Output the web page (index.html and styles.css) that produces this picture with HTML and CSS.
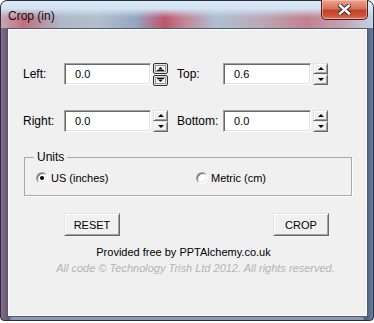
FILE: index.html
```html
<!DOCTYPE html>
<html lang="en">
<head>
    <meta charset="UTF-8">
    <meta name="viewport" content="width=device-width, initial-scale=1.0">
    <title>Crop (in)</title>
    <link rel="stylesheet" href="styles.css">
</head>
<body>
    <div class="window">
        <div class="titlebar">
            <span class="title">Crop (in)</span>
            <button class="close" title="Close">
                <svg width="13" height="11" viewBox="0 0 13 11">
                    <path d="M2 1.5 L11 9.5 M11 1.5 L2 9.5" stroke="#3b2a28" stroke-width="4.4" stroke-linecap="square"/>
                    <path d="M2 1.5 L11 9.5 M11 1.5 L2 9.5" stroke="#ffffff" stroke-width="2.4" stroke-linecap="square"/>
                </svg>
            </button>
        </div>

        <div class="client">
            <div class="fields">
                <label class="field-label" for="left">Left:</label>
                <input class="num" type="text" id="left" value="0.0">
                <div class="spin-cell">
                    <svg class="spin-img" width="15" height="23" viewBox="0 0 15 23">
                        <rect x="0.5" y="0.5" width="14" height="10" rx="1.5" fill="#e2e2e2" stroke="#333"/>
                        <rect x="2.5" y="2.5" width="10" height="6" fill="#f6f6f6" stroke="#999"/>
                        <path d="M5 6.5 L10 6.5 L7.5 4 Z" fill="#000"/>
                        <rect x="4" y="7" width="7" height="1" fill="#000"/>
                        <rect x="0.5" y="12.5" width="14" height="10" rx="1.5" fill="#e2e2e2" stroke="#333"/>
                        <rect x="2.5" y="14.5" width="10" height="6" fill="#f6f6f6" stroke="#999"/>
                        <rect x="4" y="15" width="7" height="1" fill="#000"/>
                        <path d="M5 16.5 L10 16.5 L7.5 19 Z" fill="#000"/>
                    </svg>
                </div>
                <label class="field-label second" for="top">Top:</label>
                <input class="num" type="text" id="top" value="0.6">
                <div class="spin-cell">
                    <div class="spin">
                        <span class="spin-btn"><i class="arrow up"></i></span>
                        <span class="spin-btn"><i class="arrow down"></i></span>
                    </div>
                </div>

                <label class="field-label" for="right">Right:</label>
                <input class="num" type="text" id="right" value="0.0">
                <div class="spin-cell">
                    <div class="spin">
                        <span class="spin-btn"><i class="arrow up"></i></span>
                        <span class="spin-btn"><i class="arrow down"></i></span>
                    </div>
                </div>
                <label class="field-label second" for="bottom">Bottom:</label>
                <input class="num" type="text" id="bottom" value="0.0">
                <div class="spin-cell">
                    <div class="spin">
                        <span class="spin-btn"><i class="arrow up"></i></span>
                        <span class="spin-btn"><i class="arrow down"></i></span>
                    </div>
                </div>
            </div>

            <fieldset class="units">
                <legend>Units</legend>
                <div class="radio-row">
                    <label class="option"><input type="radio" name="units" class="radio" checked> US (inches)</label>
                    <label class="option"><input type="radio" name="units" class="radio"> Metric (cm)</label>
                </div>
            </fieldset>

            <div class="actions">
                <button class="btn">RESET</button>
                <button class="btn">CROP</button>
            </div>

            <p class="credit">Provided free by PPTAlchemy.co.uk</p>
            <p class="copyright">All code &copy; Technology Trish Ltd 2012. All rights reserved.</p>
        </div>
    </div>
</body>
</html>
```

FILE: styles.css
```css
/* General Styles */
body {
    margin: 0;
    background-color: #ffffff;
    font-family: "Liberation Sans", Arial, sans-serif;
    font-size: 11px;
    color: #000;
}

/* Window frame */
.window {
    width: 374px;
    height: 321px;
    box-sizing: border-box;
    border: 1px solid #28313d;
    border-radius: 7px 7px 4px 4px;
    padding: 0 5px 3px 6px;
    display: flex;
    flex-direction: column;
    background:
        linear-gradient(to right, #8a6a84 0, #5d5878 2%, rgba(90, 100, 130, 0) 3%, rgba(90, 100, 130, 0) 97%, #4a5a7c 98%, #6a7fa0 100%),
        linear-gradient(to bottom, #cfdff0 0, #bcc9dc 12%, #7e6a8a 30%, #4f5f85 45%, #6c4660 65%, #6a6f8e 80%, #8a9ab8 100%);
}

/* Title bar */
.titlebar {
    height: 27px;
    display: flex;
    align-items: flex-start;
    margin: 0 -5px 0 -6px;
    padding: 0 5px 0 6px;
    border-radius: 6px 6px 0 0;
    background:
        linear-gradient(to bottom, #dbe8f6 0, #d3e3f4 28%, rgba(211, 227, 244, 0.3) 50%, rgba(211, 227, 244, 0) 62%),
        linear-gradient(to right, #c9a6b2 0, #c0707f 6%, #aeb8c8 16%, #b3bfcc 26%, #95a7c4 36%, #bf566c 44%, #c08c9c 50%, #aebfd2 58%, #bba9b6 70%, #c4808f 82%, #c3a4b0 92%, #c3d2e3 100%);
}

.title {
    padding: 7px 0 0 1px;
    font-size: 12px;
    line-height: 16px;
    color: #101010;
}

.close {
    margin: -1px 0 0 auto;
    width: 47px;
    height: 20px;
    padding: 0;
    border: 1px solid #4a211b;
    border-top: none;
    border-radius: 0 0 5px 5px;
    background: linear-gradient(to bottom, #e9a591 0, #d9715a 45%, #c2402a 55%, #cf553b 85%, #e0806a 100%);
    box-shadow: inset 0 0 0 1px rgba(255, 210, 200, 0.5);
    display: flex;
    align-items: center;
    justify-content: center;
}

/* Client area */
.client {
    height: 289px;
    box-sizing: border-box;
    border: 1px solid #4e5c6e;
    box-shadow: inset 0 0 0 1px #fcfcfc;
    background-color: #f0f0f0;
    padding: 34px 15px 0 15px;
}

/* Number fields */
.fields {
    display: grid;
    grid-template-columns: 41px 87px 17px 55px 88px 17px;
    grid-auto-rows: 22px;
    row-gap: 25px;
    align-items: center;
}

.field-label {
    font-size: 12px;
}

.field-label.second {
    padding-left: 9px;
}

.num {
    width: 100%;
    height: 22px;
    box-sizing: border-box;
    margin: 0;
    padding: 0 0 0 10px;
    border-style: solid;
    border-width: 1px;
    border-color: #a0a0a0 #ffffff #ffffff #a0a0a0;
    box-shadow: inset 1px 1px 0 #696969, inset -1px -1px 0 #e3e3e3;
    background-color: #ffffff;
    font-family: inherit;
    font-size: 11px;
    outline: none;
}

.spin-cell {
    padding-left: 2px;
    height: 22px;
}

.spin-img {
    display: block;
}

.spin {
    width: 15px;
    height: 22px;
    display: flex;
    flex-direction: column;
}

.spin-btn {
    flex: 1;
    box-sizing: border-box;
    background-color: #f0f0f0;
    border-style: solid;
    border-width: 1px;
    border-color: #e3e3e3 #696969 #696969 #e3e3e3;
    box-shadow: inset 1px 1px 0 #ffffff, inset -1px -1px 0 #a0a0a0;
    display: flex;
    align-items: center;
    justify-content: center;
}

.arrow {
    width: 0;
    height: 0;
    border-left: 3px solid transparent;
    border-right: 3px solid transparent;
}

.arrow.up {
    border-bottom: 3px solid #000;
}

.arrow.down {
    border-top: 3px solid #000;
}

/* Units group */
.units {
    margin: 19px 0 0 1px;
    padding: 7px 10px 10px 11px;
    border: 1px solid #a9a9a9;
    box-shadow: 1px 1px 0 #ffffff;
}

.units legend {
    margin-left: -2px;
    padding: 0 3px;
    line-height: 13px;
    font-size: 12px;
}

.radio-row {
    display: grid;
    grid-template-columns: 160px auto;
    height: 14px;
    align-items: center;
}

.option {
    display: flex;
    align-items: center;
    font-size: 11px;
}

.radio {
    appearance: none;
    -webkit-appearance: none;
    margin: 0 3px 0 0;
    width: 12px;
    height: 12px;
    box-sizing: border-box;
    border-radius: 50%;
    border: 1px solid;
    border-color: #a0a0a0 #ffffff #ffffff #a0a0a0;
    box-shadow: inset 1px 1px 0 #696969, inset -1px -1px 0 #e3e3e3;
    background-color: #ffffff;
    display: flex;
    align-items: center;
    justify-content: center;
}

.radio:checked::after {
    content: "";
    width: 4px;
    height: 4px;
    border-radius: 50%;
    background-color: #000;
}

/* Buttons */
.actions {
    margin-top: 17px;
    padding: 0 23px 0 41px;
    display: flex;
    justify-content: space-between;
}

.btn {
    width: 56px;
    height: 23px;
    padding: 0;
    background-color: #f0f0f0;
    border-style: solid;
    border-width: 1px;
    border-color: #e3e3e3 #696969 #696969 #e3e3e3;
    box-shadow: inset 1px 1px 0 #ffffff, inset -1px -1px 0 #a0a0a0;
    font-family: inherit;
    font-size: 11px;
    color: #000;
}

/* Footer text */
.credit {
    margin: 8px 8px 0 0;
    line-height: 16px;
    text-align: center;
    font-size: 11px;
}

.copyright {
    margin: 0 0 0 16px;
    line-height: 16px;
    text-align: center;
    font-size: 11px;
    font-style: italic;
    color: #b4b4b4;
}
```
